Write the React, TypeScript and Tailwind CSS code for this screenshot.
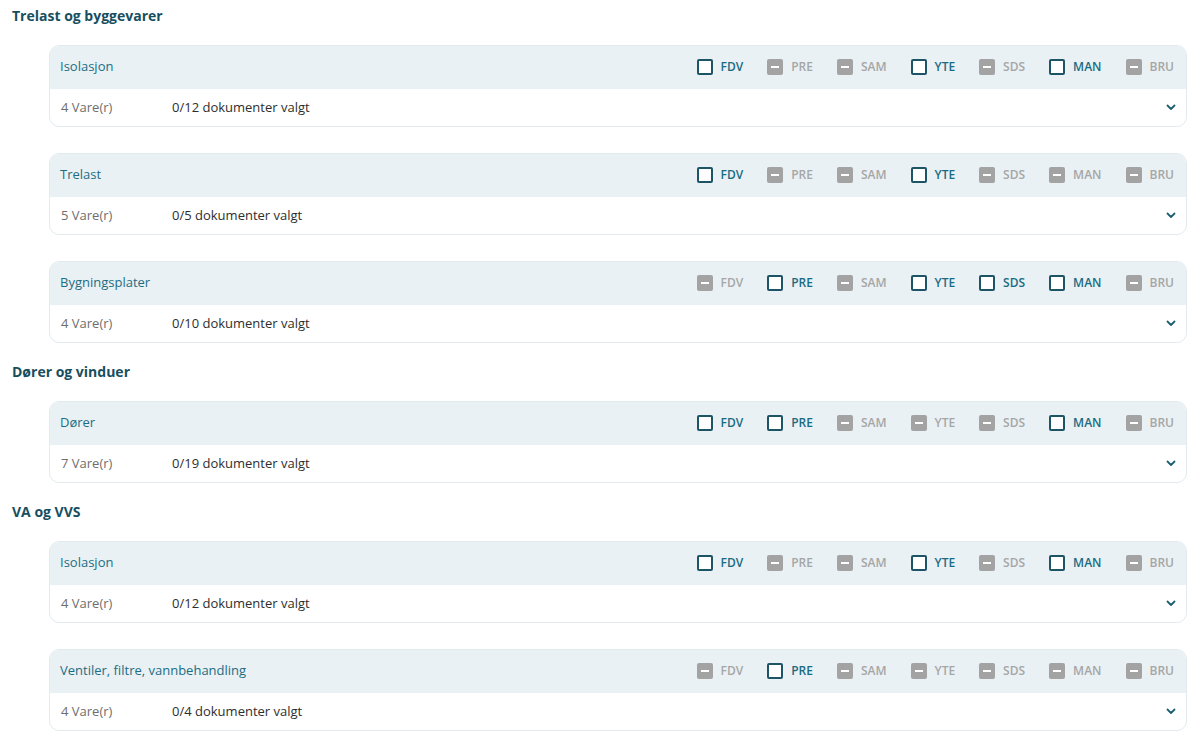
import React from "react";

type Doc = { code: string; enabled: boolean };
type Group = { title: string; count: number; total: number; docs: Doc[] };
type Section = { heading: string; groups: Group[] };

const CODES = ["FDV", "PRE", "SAM", "YTE", "SDS", "MAN", "BRU"];

const docs = (enabled: string[]): Doc[] =>
  CODES.map((code) => ({ code, enabled: enabled.includes(code) }));

const sections: Section[] = [
  {
    heading: "Trelast og byggevarer",
    groups: [
      { title: "Isolasjon", count: 4, total: 12, docs: docs(["FDV", "YTE", "MAN"]) },
      { title: "Trelast", count: 5, total: 5, docs: docs(["FDV", "YTE"]) },
      { title: "Bygningsplater", count: 4, total: 10, docs: docs(["PRE", "YTE", "SDS", "MAN"]) },
    ],
  },
  {
    heading: "Dører og vinduer",
    groups: [{ title: "Dører", count: 7, total: 19, docs: docs(["FDV", "PRE", "MAN"]) }],
  },
  {
    heading: "VA og VVS",
    groups: [
      { title: "Isolasjon", count: 4, total: 12, docs: docs(["FDV", "YTE", "MAN"]) },
      { title: "Ventiler, filtre, vannbehandling", count: 4, total: 4, docs: docs(["PRE"]) },
    ],
  },
];

function DocCheck({ doc }: { doc: Doc }) {
  return (
    <label className="flex items-center gap-2 select-none">
      {doc.enabled ? (
        <span className="w-4 h-4 rounded-[2px] border-2 border-[#1d5466] bg-white" />
      ) : (
        <span className="w-4 h-4 rounded-[2px] bg-[#a3a3a3] flex items-center justify-center">
          <span className="w-2 h-[2px] bg-white" />
        </span>
      )}
      <span
        className={
          doc.enabled
            ? "text-[12px] font-semibold text-[#196b82]"
            : "text-[12px] font-semibold text-[#a6a6a6]"
        }
      >
        {doc.code}
      </span>
    </label>
  );
}

function Chevron() {
  return (
    <svg width="10" height="7" viewBox="0 0 10 7" fill="none">
      <path d="M1.5 1.5 L5 5 L8.5 1.5" stroke="#1d5f73" strokeWidth="1.8" strokeLinecap="round" strokeLinejoin="round" />
    </svg>
  );
}

function GroupCard({ group }: { group: Group }) {
  return (
    <div className="ml-[37px] rounded-[10px] border border-[#e3eaed] overflow-hidden bg-white">
      <div className="h-[43px] bg-[#e9f1f4] flex items-center justify-between pl-[10px] pr-3 pb-[2px]">
        <span className="text-[13px] text-[#1c6d84]">{group.title}</span>
        <div className="flex items-center gap-[24px]">
          {group.docs.map((d) => (
            <DocCheck key={d.code} doc={d} />
          ))}
        </div>
      </div>
      <div className="h-[37px] flex items-center pl-[11px] pr-[10px]">
        <span className="w-[111px] text-[13px] text-[#6e6e6e]">{group.count} Vare(r)</span>
        <span className="flex-1 text-[13px] font-medium text-[#2e2e2e]">
          0/{group.total} dokumenter valgt
        </span>
        <Chevron />
      </div>
    </div>
  );
}

export default function App() {
  return (
    <div
      className="w-[1200px] min-h-[745px] bg-white pl-3 pr-[13px] pt-[6px] flex flex-col gap-[19px]"
      style={{ fontFamily: '"Open Sans", "Noto Sans", sans-serif' }}
    >
      {sections.map((s) => (
        <section key={s.heading} className="flex flex-col">
          <h2 className="h-5 leading-5 text-[14px] font-bold text-[#174f61] mb-[19px]">{s.heading}</h2>
          <div className="flex flex-col gap-[26px]">
            {s.groups.map((g, i) => (
              <GroupCard key={i} group={g} />
            ))}
          </div>
        </section>
      ))}
    </div>
  );
}
